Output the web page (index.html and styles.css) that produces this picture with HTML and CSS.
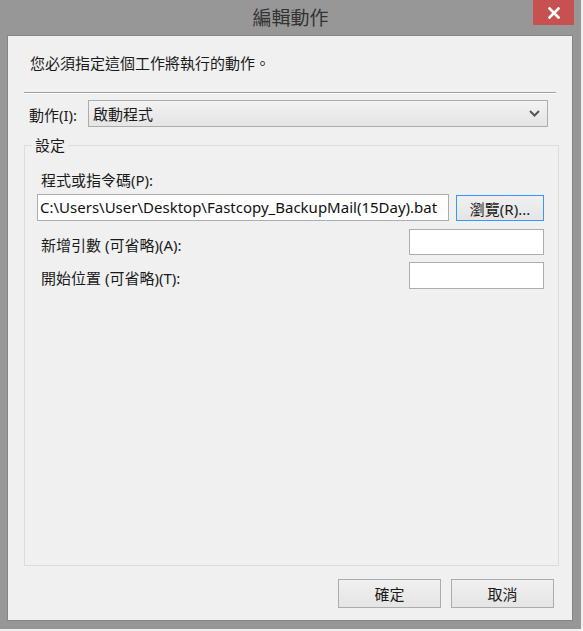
FILE: index.html
```html
<!DOCTYPE html>
<html lang="zh-Hant">
<head>
<meta charset="utf-8">
<title>編輯動作</title>
<link rel="stylesheet" href="styles.css">
</head>
<body>
<div class="window">
  <div class="titlebar">
    <div class="title">編輯動作</div>
    <div class="close">
      <svg width="12" height="12" viewBox="0 0 12 12"><path d="M1.5 1.5 L10.5 10.5 M10.5 1.5 L1.5 10.5" stroke="#fff" stroke-width="2.6" stroke-linecap="square" fill="none"/></svg>
    </div>
  </div>
  <div class="content">
    <div class="intro">您必須指定這個工作將執行的動作。</div>
    <div class="separator"></div>
    <div class="action-row">
      <span class="label">動作(I):</span>
      <div class="combo">
        <span>啟動程式</span>
        <svg width="11" height="7" viewBox="0 0 11 7"><path d="M1 1 L5.5 5.5 L10 1" stroke="#555" stroke-width="2" fill="none"/></svg>
      </div>
    </div>
    <fieldset class="group">
      <legend>設定</legend>
      <div class="label prog-label">程式或指令碼(P):</div>
      <div class="path-row">
        <div class="textbox path">C:\Users\User\Desktop\Fastcopy_BackupMail(15Day).bat</div>
        <div class="button browse">瀏覽(R)...</div>
      </div>
      <div class="arg-row">
        <span class="label">新增引數 (可省略)(A):</span>
        <div class="textbox small"></div>
      </div>
      <div class="arg-row second">
        <span class="label">開始位置 (可省略)(T):</span>
        <div class="textbox small"></div>
      </div>
    </fieldset>
    <div class="footer">
      <div class="button">確定</div>
      <div class="button">取消</div>
    </div>
  </div>
</div>
</body>
</html>
```
FILE: styles.css
```css
html, body {
  margin: 0;
  padding: 0;
}
body {
  background: #f0f0f0;
  width: 583px;
  height: 631px;
  overflow: hidden;
  font-family: "Noto Sans", "Noto Sans CJK TC", sans-serif;
  font-size: 15px;
  color: #1a1a1a;
}
.window {
  width: 581px;
  height: 629px;
  box-sizing: border-box;
  background: #979797;
  padding: 0 8px 8px 7px;
  display: flex;
  flex-direction: column;
}
.titlebar {
  height: 35px;
  margin: 0 -8px 0 -7px;
  display: grid;
  grid-template-columns: 1fr auto 1fr;
  align-items: start;
}
.title {
  grid-column: 2;
  font-family: "Noto Sans CJK TC", sans-serif;
  font-size: 19px;
  line-height: 34px;
  color: #333;
}
.close {
  grid-column: 3;
  justify-self: end;
  margin-right: 7px;
  width: 41px;
  height: 25px;
  background: #c75050;
  display: flex;
  align-items: center;
  justify-content: center;
}
.content {
  flex: 1;
  background: #f0f0f0;
  border: 1px solid #858585;
  display: flex;
  flex-direction: column;
}
.intro {
  margin: 17px 0 0 22px;
  line-height: 20px;
  font-family: "Noto Sans CJK TC", sans-serif;
}
.separator {
  margin: 19px 0 0 16px;
  width: 532px;
  border-top: 1px solid #a0a0a0;
  border-bottom: 1px solid #fff;
}
.action-row {
  margin-top: 6px;
  display: flex;
  align-items: center;
  padding-left: 21px;
}
.action-row .label {
  width: 59px;
  padding-top: 2px;
}
.label {
  line-height: 20px;
}
.combo {
  width: 460px;
  height: 27px;
  box-sizing: border-box;
  border: 1px solid #acacac;
  background: linear-gradient(#f2f2f2, #e5e5e5);
  display: flex;
  align-items: center;
  justify-content: space-between;
  padding: 0 7px 0 4px;
  font-family: "Noto Sans CJK TC", sans-serif;
}
.group {
  margin: 8px 0 0 16px;
  width: 535px;
  box-sizing: border-box;
  flex: 1;
  border: 1px solid #dcdcdc;
  padding: 0 13px 0 12px;
  min-width: 0;
}
.group legend {
  margin-left: -5px;
  padding: 0 3px;
  line-height: 20px;
  font-family: "Noto Sans CJK TC", sans-serif;
}
.prog-label {
  margin: 15px 0 0 4px;
}
.path-row {
  margin-top: 4px;
  display: flex;
  align-items: flex-start;
  gap: 7px;
}
.textbox {
  box-sizing: border-box;
  border: 1px solid #abadb3;
  background: #fff;
}
.path {
  width: 412px;
  height: 27px;
  padding-left: 2px;
  line-height: 25px;
  font-size: 15px;
  white-space: nowrap;
  overflow: hidden;
  color: #111;
}
.button {
  box-sizing: border-box;
  border: 1px solid #acacac;
  background: linear-gradient(#f0f0f0, #e5e5e5);
  display: flex;
  align-items: center;
  justify-content: center;
}
.browse {
  margin-top: 1px;
  width: 88px;
  height: 26px;
  border-color: #3399ff;
}
.arg-row {
  margin-top: 8px;
  display: flex;
  justify-content: space-between;
  align-items: center;
  padding-left: 4px;
  padding-right: 1px;
}
.arg-row .label {
  padding-top: 5px;
}
.arg-row.second {
  margin-top: 7px;
}
.small {
  width: 135px;
  height: 26px;
}
.arg-row.second .small {
  height: 27px;
}
.footer {
  display: flex;
  justify-content: flex-end;
  gap: 10px;
  margin: 13px 18px 12px 0;
}
.footer .button {
  width: 103px;
  height: 29px;
  font-family: "Noto Sans CJK TC", sans-serif;
}
```
